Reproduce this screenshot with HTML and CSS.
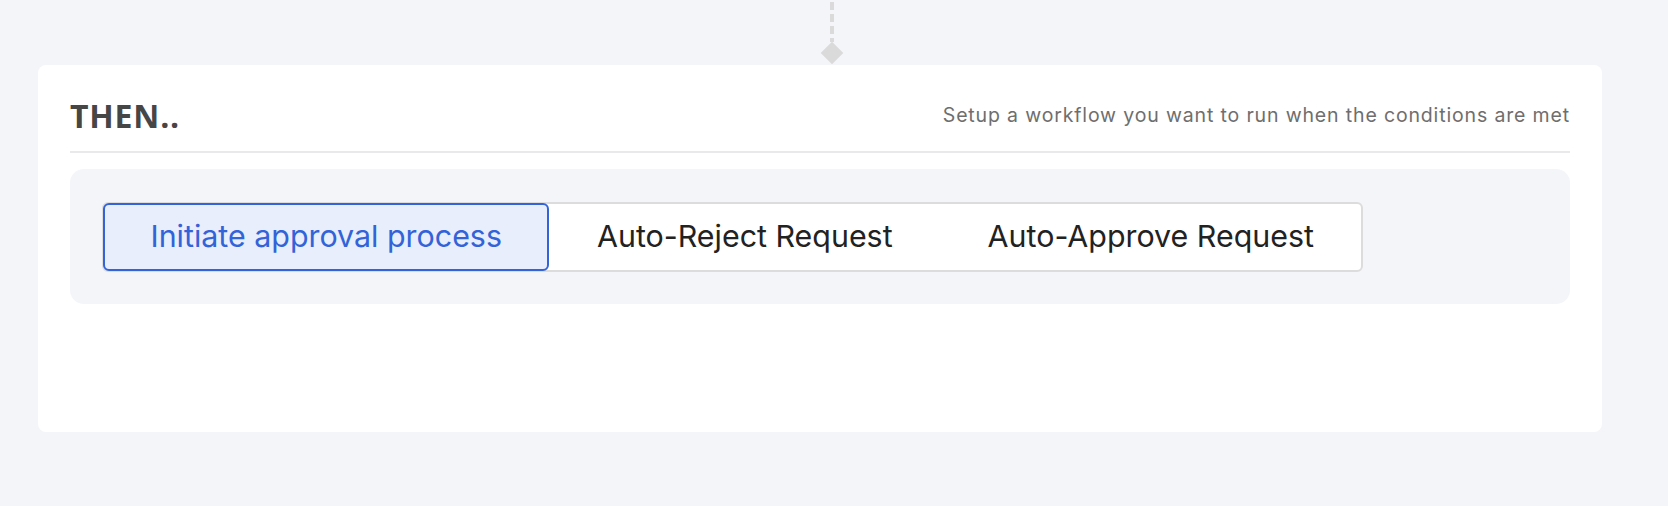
FILE: index.html
```html
<!DOCTYPE html>
<html>
<head>
<meta charset="utf-8">
<link rel="stylesheet" href="styles.css">
</head>
<body>
<div class="page">
  <div class="connector">
    <div class="dash"></div>
    <div class="diamond"></div>
  </div>
  <section class="card">
    <header class="card-head">
      <h2 class="title">THEN..</h2>
      <p class="subtitle">Setup a workflow you want to run when the conditions are met</p>
    </header>
    <div class="panel">
      <div class="segmented">
        <button class="seg seg-active">Initiate approval process</button>
        <button class="seg">Auto-Reject Request</button>
        <button class="seg">Auto-Approve Request</button>
      </div>
    </div>
  </section>
</div>
</body>
</html>
```

FILE: styles.css
```css
html, body {
  margin: 0;
  padding: 0;
  background: #ffffff;
}

.page {
  box-sizing: border-box;
  width: 1668px;
  height: 506px;
  background: #f4f5f9;
  padding: 0 66px 0 38px;
  font-family: Inter, "Noto Sans", sans-serif;
}

.connector {
  height: 65px;
  display: flex;
  flex-direction: column;
  align-items: center;
  width: 22px;
  margin-left: 783px;
}

.dash {
  width: 4px;
  height: 42px;
  background: repeating-linear-gradient(to bottom, transparent 0 2px, #dadada 2px 10px, transparent 10px 12px);
}

.diamond {
  width: 16px;
  height: 16px;
  background: #dadada;
  transform: rotate(45deg);
  margin-top: 3px;
}

.card {
  box-sizing: border-box;
  height: 367px;
  background: #ffffff;
  border-radius: 8px;
  padding: 0 32px;
}

.card-head {
  box-sizing: border-box;
  height: 88px;
  padding-top: 21px;
  padding-bottom: 7px;
  display: flex;
  justify-content: space-between;
  align-items: center;
  border-bottom: 2px solid #e9e9ec;
}

.title {
  margin: 0;
  font-family: "Open Sans", sans-serif;
  font-weight: 700;
  font-size: 32px;
  letter-spacing: 0.8px;
  color: #464646;
}

.subtitle {
  margin: 0;
  font-size: 19.5px;
  letter-spacing: 0.85px;
  color: #6e6e6e;
}

.panel {
  margin-top: 16px;
  background: #f4f5f9;
  border-radius: 14px;
  padding: 33px 32px 32px;
  display: flex;
}

.segmented {
  display: flex;
  border: 2px solid #dcdcdc;
  border-radius: 6px;
  background: #ffffff;
  height: 70px;
  box-sizing: border-box;
}

.seg {
  font-family: Inter, "Noto Sans", sans-serif;
  font-size: 30.4px;
  color: #222222;
  background: transparent;
  border: 2px solid transparent;
  border-radius: 6px;
  padding: 0 45.5px 3px;
  margin: -1px 0;
  cursor: pointer;
}

.seg-active {
  background: #e8eefb;
  border-color: #3263d8;
  color: #3263d8;
  margin-left: -1px;
}
```
